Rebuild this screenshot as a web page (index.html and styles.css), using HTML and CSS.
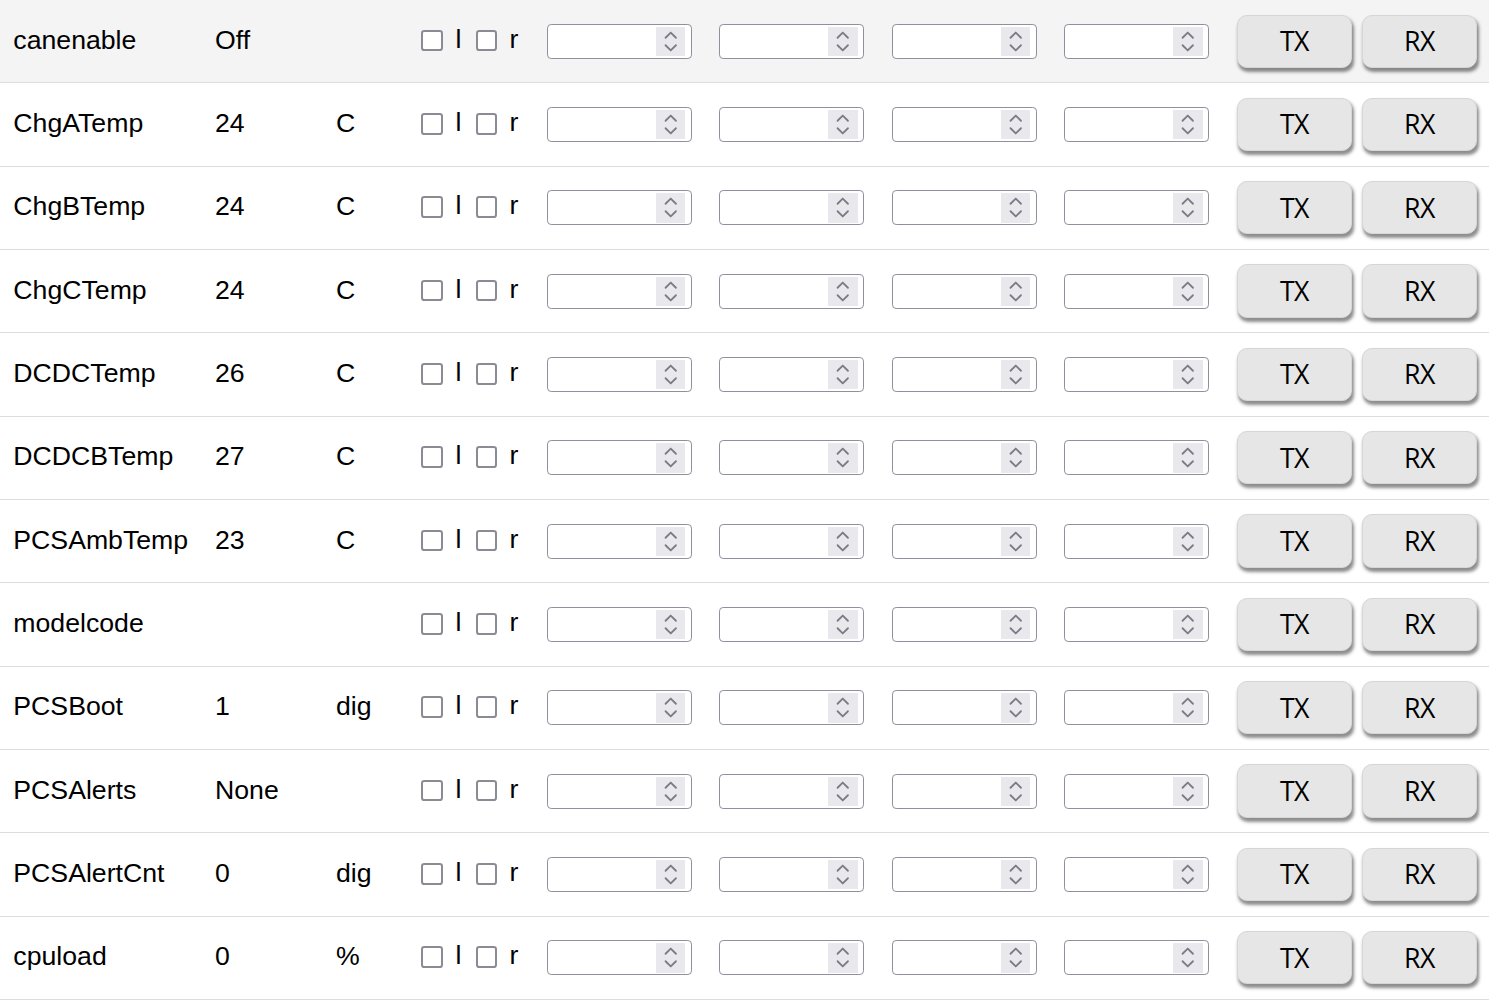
FILE: index.html
```html
<!DOCTYPE html>
<html>
<head>
<meta charset="utf-8">
<link rel="stylesheet" href="styles.css">
</head>
<body>
<div class="sheet" id="sheet"></div>
<template id="rowtpl">
  <div class="row">
    <div class="c name"></div><div class="c val"></div><div class="c unit"></div>
    <div class="c chk"><input type="checkbox"> l <input type="checkbox"> r</div>
    <div class="c inp"><span class="num"><input type="number"><span class="spin"><svg viewBox="0 0 18 18" width="18" height="18"><polyline points="5.8,6.6 9,3.4 12.2,6.6"/><polyline points="5.8,11.2 9,14.4 12.2,11.2"/></svg></span></span></div>
    <div class="c inp"><span class="num"><input type="number"><span class="spin"><svg viewBox="0 0 18 18" width="18" height="18"><polyline points="5.8,6.6 9,3.4 12.2,6.6"/><polyline points="5.8,11.2 9,14.4 12.2,11.2"/></svg></span></span></div>
    <div class="c inp"><span class="num"><input type="number"><span class="spin"><svg viewBox="0 0 18 18" width="18" height="18"><polyline points="5.8,6.6 9,3.4 12.2,6.6"/><polyline points="5.8,11.2 9,14.4 12.2,11.2"/></svg></span></span></div>
    <div class="c inp"><span class="num"><input type="number"><span class="spin"><svg viewBox="0 0 18 18" width="18" height="18"><polyline points="5.8,6.6 9,3.4 12.2,6.6"/><polyline points="5.8,11.2 9,14.4 12.2,11.2"/></svg></span></span></div>
    <div class="c btns"><button>TX</button><button>RX</button></div>
  </div>
</template>
<script src="app.js"></script>
</body>
</html>
```

FILE: app.js
```js
var data = [
  ["canenable", "Off", ""],
  ["ChgATemp", "24", "C"],
  ["ChgBTemp", "24", "C"],
  ["ChgCTemp", "24", "C"],
  ["DCDCTemp", "26", "C"],
  ["DCDCBTemp", "27", "C"],
  ["PCSAmbTemp", "23", "C"],
  ["modelcode", "", ""],
  ["PCSBoot", "1", "dig"],
  ["PCSAlerts", "None", ""],
  ["PCSAlertCnt", "0", "dig"],
  ["cpuload", "0", "%"]
];
var sheet = document.getElementById("sheet");
var tpl = document.getElementById("rowtpl");
data.forEach(function (d, i) {
  var frag = tpl.content.cloneNode(true);
  var row = frag.querySelector(".row");
  if (i === 0) row.classList.add("hover");
  row.querySelector(".name").textContent = d[0];
  row.querySelector(".val").textContent = d[1];
  row.querySelector(".unit").textContent = d[2];
  sheet.appendChild(frag);
});
```

FILE: styles.css
```css
html, body {
  margin: 0;
  padding: 0;
  background: #ffffff;
}

body {
  font-family: "Liberation Sans", Arial, sans-serif;
  font-size: 16px;
  color: #000;
  overflow: hidden;
}

.sheet {
  zoom: 1.66667;
  width: 893.4px;
}

.row {
  display: grid;
  grid-template-columns: 121px 72.6px 47.3px 79.3px 103.5px 103.5px 103.5px 103.5px 1fr;
  height: 50px;
  box-sizing: border-box;
  border-bottom: 1px solid #dddddd;
  align-items: center;
}

.row.hover {
  background: #f4f4f4;
}

.c {
  padding: 0 0 0 8px;
  white-space: nowrap;
}

.name, .val, .unit, .chk {
  position: relative;
  top: -0.6px;
}

.chk input[type="checkbox"] {
  -webkit-appearance: none;
  appearance: none;
  width: 13px;
  height: 13px;
  box-sizing: border-box;
  border: 1.7px solid #8b8b96;
  border-radius: 2px;
  background: #fff;
  margin: 3px 3px 3px 4px;
  vertical-align: -5.2px;
}

.num {
  position: relative;
  display: block;
  width: 87px;
  height: 21px;
}

.num input {
  width: 87px;
  height: 21px;
  box-sizing: border-box;
  font-size: 13.33px;
  margin: 0;
  display: block;
  border: 1px solid #8f8f9d;
  border-radius: 2.5px;
  background: #fff;
  padding: 1px 2px;
  -moz-appearance: textfield;
}

.num input::-webkit-inner-spin-button,
.num input::-webkit-outer-spin-button {
  -webkit-appearance: none;
  margin: 0;
}

.spin {
  position: absolute;
  right: 4px;
  top: 1.8px;
  width: 17.7px;
  height: 17.6px;
  background: #e9e9ed;
}

.spin svg {
  display: block;
  width: 17.7px;
  height: 17.6px;
  fill: none;
  stroke: #7b7b85;
  stroke-width: 1.1;
  stroke-linecap: round;
  stroke-linejoin: round;
}

.btns {
  display: flex;
  gap: 6px;
  align-items: center;
}

.btns button {
  width: 69px;
  height: 32px;
  background: #e6e6e6;
  border: 1px solid #d6d6d6;
  border-radius: 6px;
  box-shadow: 1px 2px 2px rgba(0, 0, 0, 0.45);
  font-family: "Open Sans", "Noto Sans", sans-serif;
  font-size: 16px;
  letter-spacing: -0.3px;
  color: #000;
  padding: 0;
  margin-top: 0;
}
```
